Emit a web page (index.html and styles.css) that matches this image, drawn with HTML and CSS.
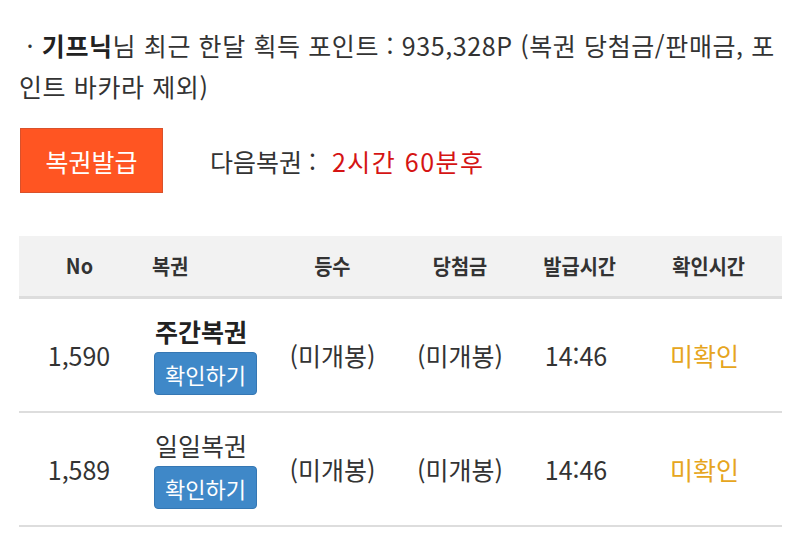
FILE: index.html
```html
<!DOCTYPE html>
<html lang="ko">
<head>
<meta charset="utf-8">
<link rel="stylesheet" href="styles.css">
</head>
<body>
<div class="page">
  <p class="info">&nbsp;· <b>기프닉</b>님 최근 한달 획득 포인트 : 935,328P (복권 당첨금/판매금, 포인트 바카라 제외)</p>
  <div class="issue">
    <button class="issue-btn" type="button">복권발급</button>
    <div class="next">다음복권 : <span class="next-time">2시간 60분후</span></div>
  </div>
  <div class="table">
    <div class="row head">
      <div class="c c1"><span class="ht">No</span></div>
      <div class="c c2"><span class="ht">복권</span></div>
      <div class="c c3"><span class="ht">등수</span></div>
      <div class="c c4"><span class="ht">당첨금</span></div>
      <div class="c c5"><span class="ht">발급시간</span></div>
      <div class="c c6"><span class="ht">확인시간</span></div>
    </div>
    <div class="row">
      <div class="c c1">1,590</div>
      <div class="c c2"><div class="name bold">주간복권</div><button class="check" type="button">확인하기</button></div>
      <div class="c c3">(미개봉)</div>
      <div class="c c4">(미개봉)</div>
      <div class="c c5">14:46</div>
      <div class="c c6 status">미확인</div>
    </div>
    <div class="row">
      <div class="c c1">1,589</div>
      <div class="c c2"><div class="name">일일복권</div><button class="check" type="button">확인하기</button></div>
      <div class="c c3">(미개봉)</div>
      <div class="c c4">(미개봉)</div>
      <div class="c c5">14:46</div>
      <div class="c c6 status">미확인</div>
    </div>
  </div>
</div>
</body>
</html>
```
FILE: styles.css
```css
* { box-sizing: border-box; }
html, body { margin: 0; padding: 0; background: #fff; }
body {
  font-family: "Noto Sans CJK KR", "Noto Sans", sans-serif;
  color: #333;
}
.page { padding: 25px 18px 0 19px; }
.info {
  margin: 0;
  font-size: 25px;
  line-height: 41px;
  padding-left: 0;
  letter-spacing: 0.6px;
}
.info b { font-weight: 700; color: #222; }
.issue {
  display: flex;
  align-items: center;
  margin-top: 21px;
  gap: 47px;
}
.issue-btn {
  width: 143px;
  height: 65px;
  background: #ff5522;
  border: 1px solid #d9512b;
  color: #fff;
  font-family: inherit;
  font-size: 25px;
  padding: 0;
  margin: 0 0 0 1px;
}
.next { font-size: 25px; color: #333; }
.next-time { color: #d51414; letter-spacing: 1.5px; margin-left: 9px; }
.table { margin-top: 43px; width: 763px; }
.row {
  display: grid;
  grid-template-columns: 120px 131px 125px 130px 110px 147px;
  align-items: center;
  height: 114px;
  border-bottom: 2px solid #ddd;
}
.row.head {
  height: 63px;
  background: #f2f2f2;
  border-bottom: 3px solid #ddd;
  font-weight: 700;
  color: #333;
}
.c { text-align: center; font-size: 25px; }
.head .c { font-size: 21px; padding-bottom: 2px; }
.ht { display: inline-block; transform: scaleX(0.94); }
.c2 { text-align: left; padding-left: 13px; }
.c2 .ht { transform-origin: left center; }
.row:not(.head) .c2 { padding-left: 16px; }
.row:not(.head) .c5,
.row:not(.head) .c6 { padding-right: 8px; }
.name { line-height: 32px; }
.name.bold { font-weight: 700; color: #222; }
.check {
  display: block;
  margin-top: 5px;
  width: 103px;
  height: 43px;
  background: #3f88c8;
  border: 1px solid #3577b3;
  border-radius: 4px;
  color: #fff;
  font-family: inherit;
  font-size: 22px;
  padding: 0;
  margin-left: -1px;
}
.status { color: #e6a520; }
```
